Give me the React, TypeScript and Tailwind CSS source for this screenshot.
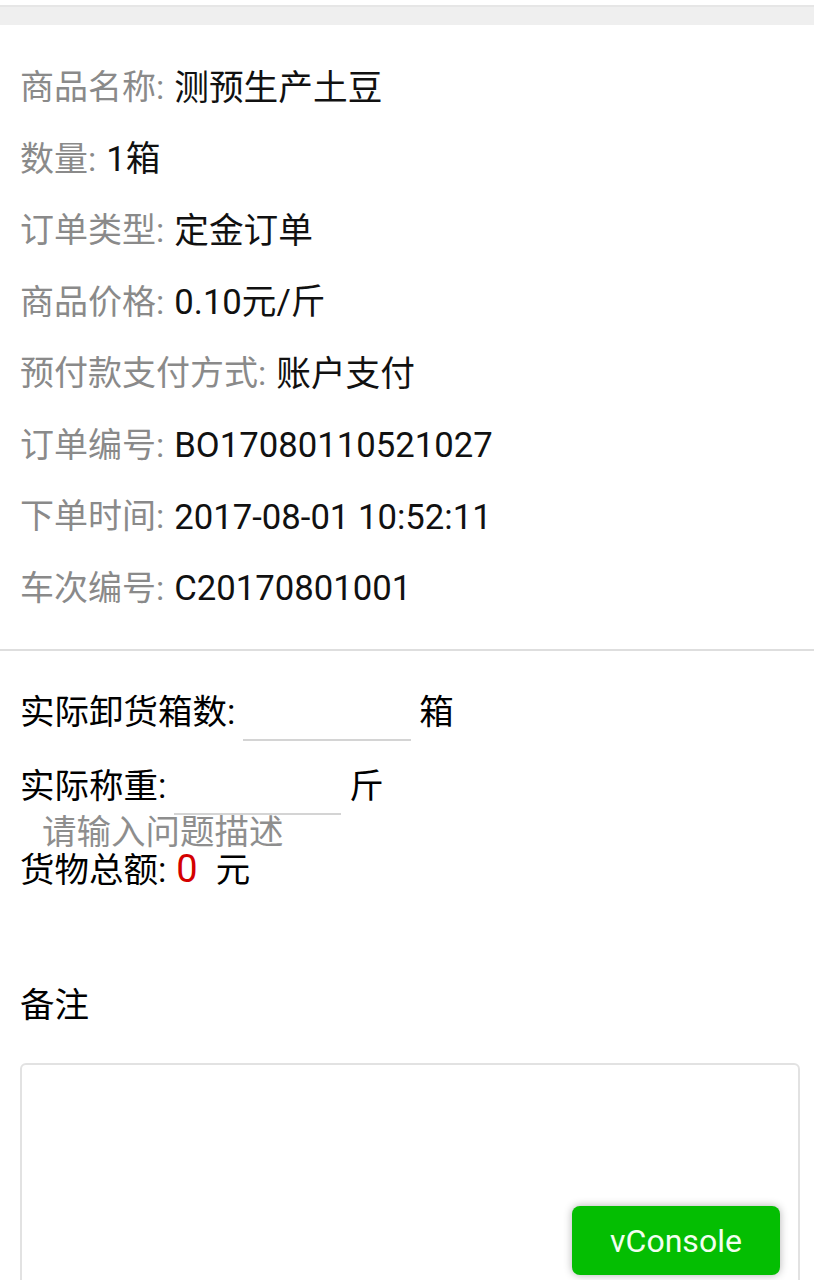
const FONT = "font-['Roboto','Noto_Sans_CJK_SC',sans-serif]";

interface InfoRow {
  label: string;
  value: string;
}

const rows: InfoRow[] = [
  { label: '商品名称', value: '测预生产土豆' },
  { label: '数量', value: '1箱' },
  { label: '订单类型', value: '定金订单' },
  { label: '商品价格', value: '0.10元/斤' },
  { label: '预付款支付方式', value: '账户支付' },
  { label: '订单编号', value: 'BO17080110521027' },
  { label: '下单时间', value: '2017-08-01 10:52:11' },
  { label: '车次编号', value: 'C20170801001' },
];

export default function App() {
  return (
    <div className={`${FONT} relative w-[814px] h-[1280px] overflow-hidden bg-white text-[34.5px] text-black`}>
      {/* top strip */}
      <div className="pt-[5px]">
        <div className="h-[20px] bg-[#efefef] border-t-2 border-[#e6e6e6]" />
      </div>

      {/* order info */}
      <div className="pt-[27px] pb-[25px] px-5 border-b-2 border-[#dedede]">
        {rows.map((row) => (
          <div key={row.label} className="h-[71.5px] flex items-center whitespace-nowrap">
            <span className="text-[34px] text-[#8a8a8a]">{row.label}:</span>
            <span className="ml-[10px] text-[34.7px] text-[#111]">{row.value}</span>
          </div>
        ))}
      </div>

      {/* unloading form */}
      <div className="pl-5 pr-[14px]">
        <div className="mt-[33px] h-[57px] flex items-center">
          <span>实际卸货箱数:</span>
          <div className="ml-2 w-[168px] h-full border-b-2 border-[#d4d4d4]" />
          <span className="ml-2">箱</span>
        </div>
        <div className="mt-[18px] h-[56px] flex items-center">
          <span>实际称重:</span>
          <div className="ml-2 w-[167px] h-full border-b-2 border-[#d4d4d4]" />
          <span className="ml-2">斤</span>
        </div>
        <div className="h-[34px] leading-[34px] ml-[22px] text-[#8e8e8e]">请输入问题描述</div>
        <div className="h-[40px] flex items-baseline leading-[40px]">
          <span>货物总额:</span>
          <span className="ml-[10px] text-[38px] text-[#d40000]">0</span>
          <span className="ml-[18px]">元</span>
        </div>

        <div className="mt-[99px] h-[34px] leading-[34px]">备注</div>
        <div className="mt-[41px] h-[260px] border-2 border-[#e2e2e2] rounded-md" />
      </div>

      {/* vConsole switch */}
      <div className="absolute left-[572px] top-[1206px] w-[208px] h-[69px] rounded-lg bg-[#04be02] shadow-[0_0_8px_rgba(0,0,0,0.3)] flex items-center justify-center text-[32px] text-[#f2fff0]">
        vConsole
      </div>
    </div>
  );
}
